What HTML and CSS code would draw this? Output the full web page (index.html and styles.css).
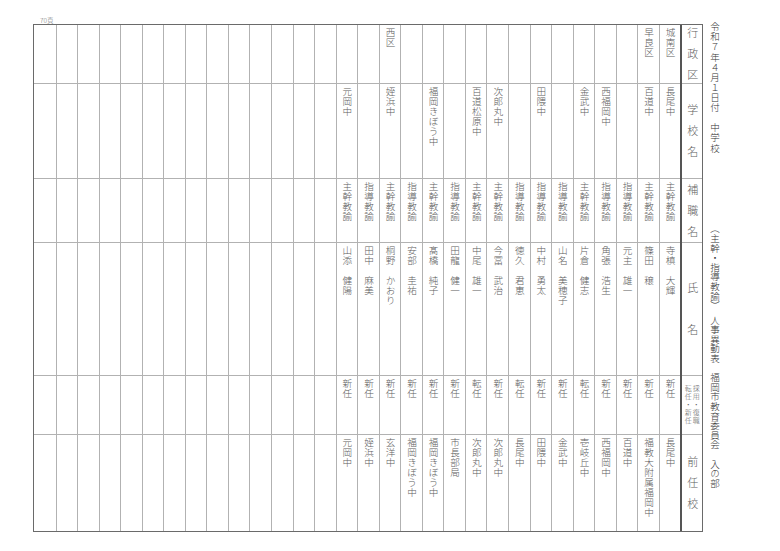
FILE: index.html
```html
<!DOCTYPE html>
<html lang="ja">
<head>
<meta charset="utf-8">
<title>人事異動表</title>
<link rel="stylesheet" href="styles.css">
</head>
<body>
<div class="page">
  <div class="main">
    <div class="pageno">70頁</div>
    <div class="table">
      <div class="col head">
        <div><span class="h3">行政区</span></div>
        <div><span class="h3">学校名</span></div>
        <div><span class="h3">補職名</span></div>
        <div><span class="h2">氏名</span></div>
        <div><span class="hs">採用・復職<br>転任・新任</span></div>
        <div><span class="h3">前任校</span></div>
      </div>
      <div class="col"><div><span>城南区</span></div><div><span>長尾中</span></div><div><span>主幹教諭</span></div><div><span>寺槙　大輝</span></div><div><span>新任</span></div><div><span>長尾中</span></div></div>
      <div class="col"><div><span>早良区</span></div><div><span>百道中</span></div><div><span>主幹教諭</span></div><div><span>篠田　穣</span></div><div><span>新任</span></div><div><span>福教大附属福岡中</span></div></div>
      <div class="col"><div></div><div></div><div><span>指導教諭</span></div><div><span>元主　雄一</span></div><div><span>新任</span></div><div><span>百道中</span></div></div>
      <div class="col"><div></div><div><span>西福岡中</span></div><div><span>指導教諭</span></div><div><span>角張　浩生</span></div><div><span>新任</span></div><div><span>西福岡中</span></div></div>
      <div class="col"><div></div><div><span>金武中</span></div><div><span>主幹教諭</span></div><div><span>片倉　健志</span></div><div><span>転任</span></div><div><span>壱岐丘中</span></div></div>
      <div class="col"><div></div><div></div><div><span>指導教諭</span></div><div><span>山名　美穂子</span></div><div><span>新任</span></div><div><span>金武中</span></div></div>
      <div class="col"><div></div><div><span>田隈中</span></div><div><span>指導教諭</span></div><div><span>中村　勇太</span></div><div><span>新任</span></div><div><span>田隈中</span></div></div>
      <div class="col"><div></div><div></div><div><span>指導教諭</span></div><div><span>徳久　君恵</span></div><div><span>転任</span></div><div><span>長尾中</span></div></div>
      <div class="col"><div></div><div><span>次郎丸中</span></div><div><span>主幹教諭</span></div><div><span>今冨　武治</span></div><div><span>新任</span></div><div><span>次郎丸中</span></div></div>
      <div class="col"><div></div><div><span>百道松原中</span></div><div><span>主幹教諭</span></div><div><span>中尾　雄一</span></div><div><span>転任</span></div><div><span>次郎丸中</span></div></div>
      <div class="col"><div></div><div></div><div><span>指導教諭</span></div><div><span>田龍　健一</span></div><div><span>新任</span></div><div><span>市長部局</span></div></div>
      <div class="col"><div></div><div><span>福岡きぼう中</span></div><div><span>主幹教諭</span></div><div><span>髙橋　純子</span></div><div><span>新任</span></div><div><span>福岡きぼう中</span></div></div>
      <div class="col"><div></div><div></div><div><span>指導教諭</span></div><div><span>安部　圭祐</span></div><div><span>新任</span></div><div><span>福岡きぼう中</span></div></div>
      <div class="col"><div><span>西区</span></div><div><span>姪浜中</span></div><div><span>主幹教諭</span></div><div><span>桐野　かおり</span></div><div><span>新任</span></div><div><span>玄洋中</span></div></div>
      <div class="col"><div></div><div></div><div><span>指導教諭</span></div><div><span>田中　麻美</span></div><div><span>新任</span></div><div><span>姪浜中</span></div></div>
      <div class="col"><div></div><div><span>元岡中</span></div><div><span>主幹教諭</span></div><div><span>山添　健陽</span></div><div><span>新任</span></div><div><span>元岡中</span></div></div>
      <div class="col"><div></div><div></div><div></div><div></div><div></div><div></div></div>
      <div class="col"><div></div><div></div><div></div><div></div><div></div><div></div></div>
      <div class="col"><div></div><div></div><div></div><div></div><div></div><div></div></div>
      <div class="col"><div></div><div></div><div></div><div></div><div></div><div></div></div>
      <div class="col"><div></div><div></div><div></div><div></div><div></div><div></div></div>
      <div class="col"><div></div><div></div><div></div><div></div><div></div><div></div></div>
      <div class="col"><div></div><div></div><div></div><div></div><div></div><div></div></div>
      <div class="col"><div></div><div></div><div></div><div></div><div></div><div></div></div>
      <div class="col"><div></div><div></div><div></div><div></div><div></div><div></div></div>
      <div class="col"><div></div><div></div><div></div><div></div><div></div><div></div></div>
      <div class="col"><div></div><div></div><div></div><div></div><div></div><div></div></div>
      <div class="col"><div></div><div></div><div></div><div></div><div></div><div></div></div>
      <div class="col"><div></div><div></div><div></div><div></div><div></div><div></div></div>
      <div class="col"><div></div><div></div><div></div><div></div><div></div><div></div></div>
    </div>
  </div>
  <div class="title">
    <span class="t1">令和７年４月１日付　中学校</span>
    <span class="t2">（主幹・指導教諭）　人事異動表　福岡市教育委員会　入の部</span>
  </div>
</div>
</body>
</html>
```

FILE: styles.css
```css
* { box-sizing: border-box; }

body {
  margin: 0;
  background: #ffffff;
  font-family: "Noto Sans CJK JP", "Noto Sans", sans-serif;
  font-weight: 300;
  color: #5e5e5e;
}

.page {
  display: flex;
  align-items: flex-start;
  width: 780px;
  height: 551px;
  padding: 16px 0 0 33px;
}

.main {
  display: flex;
  flex-direction: column;
}

.pageno {
  height: 8px;
  margin-left: 7px;
  font-size: 6.5px;
  line-height: 8px;
  color: #777;
}

.table {
  display: flex;
  flex-direction: row-reverse;
  border: 1.5px solid #6a6a6a;
}

.col {
  flex: none;
  width: 21.55px;
  display: flex;
  flex-direction: column;
  border-left: 1px solid #b2b2b2;
}

.col:last-child { border-left: none; }

.col.head {
  width: 21.5px;
  border-left: 2.5px solid #555;
}

.col > div {
  display: flex;
  justify-content: center;
  align-items: flex-start;
  padding-top: 3px;
  border-bottom: 1px solid #b2b2b2;
}

.col > div:nth-child(1) { height: 58.5px; }
.col > div:nth-child(2) { height: 95px; }
.col > div:nth-child(3) { height: 64px; }
.col > div:nth-child(4) { height: 133px; }
.col > div:nth-child(5) { height: 59px; }
.col > div:nth-child(6) { height: 96px; border-bottom: none; }

.col span {
  writing-mode: vertical-rl;
  font-size: 9.6px;
  line-height: 11px;
  letter-spacing: 0.3px;
}

.head > div {
  align-items: center;
  padding-top: 0;
}

.head span { font-size: 11px; }

.head span.h3 {
  letter-spacing: 10px;
  margin-bottom: -10px;
}

.head span.h2 {
  letter-spacing: 31px;
  margin-bottom: -31px;
}

.head span.hs {
  font-size: 7px;
  line-height: 8px;
  letter-spacing: 1px;
}

.title {
  display: flex;
  flex-direction: column;
  margin: 6px 0 0 6px;
  color: #333;
}

.t1, .t2 {
  writing-mode: vertical-rl;
  font-size: 9.5px;
  line-height: 11px;
}

.t1 { letter-spacing: 0.6px; }

.t2 {
  margin-top: 71px;
  letter-spacing: 0.1px;
}
```
